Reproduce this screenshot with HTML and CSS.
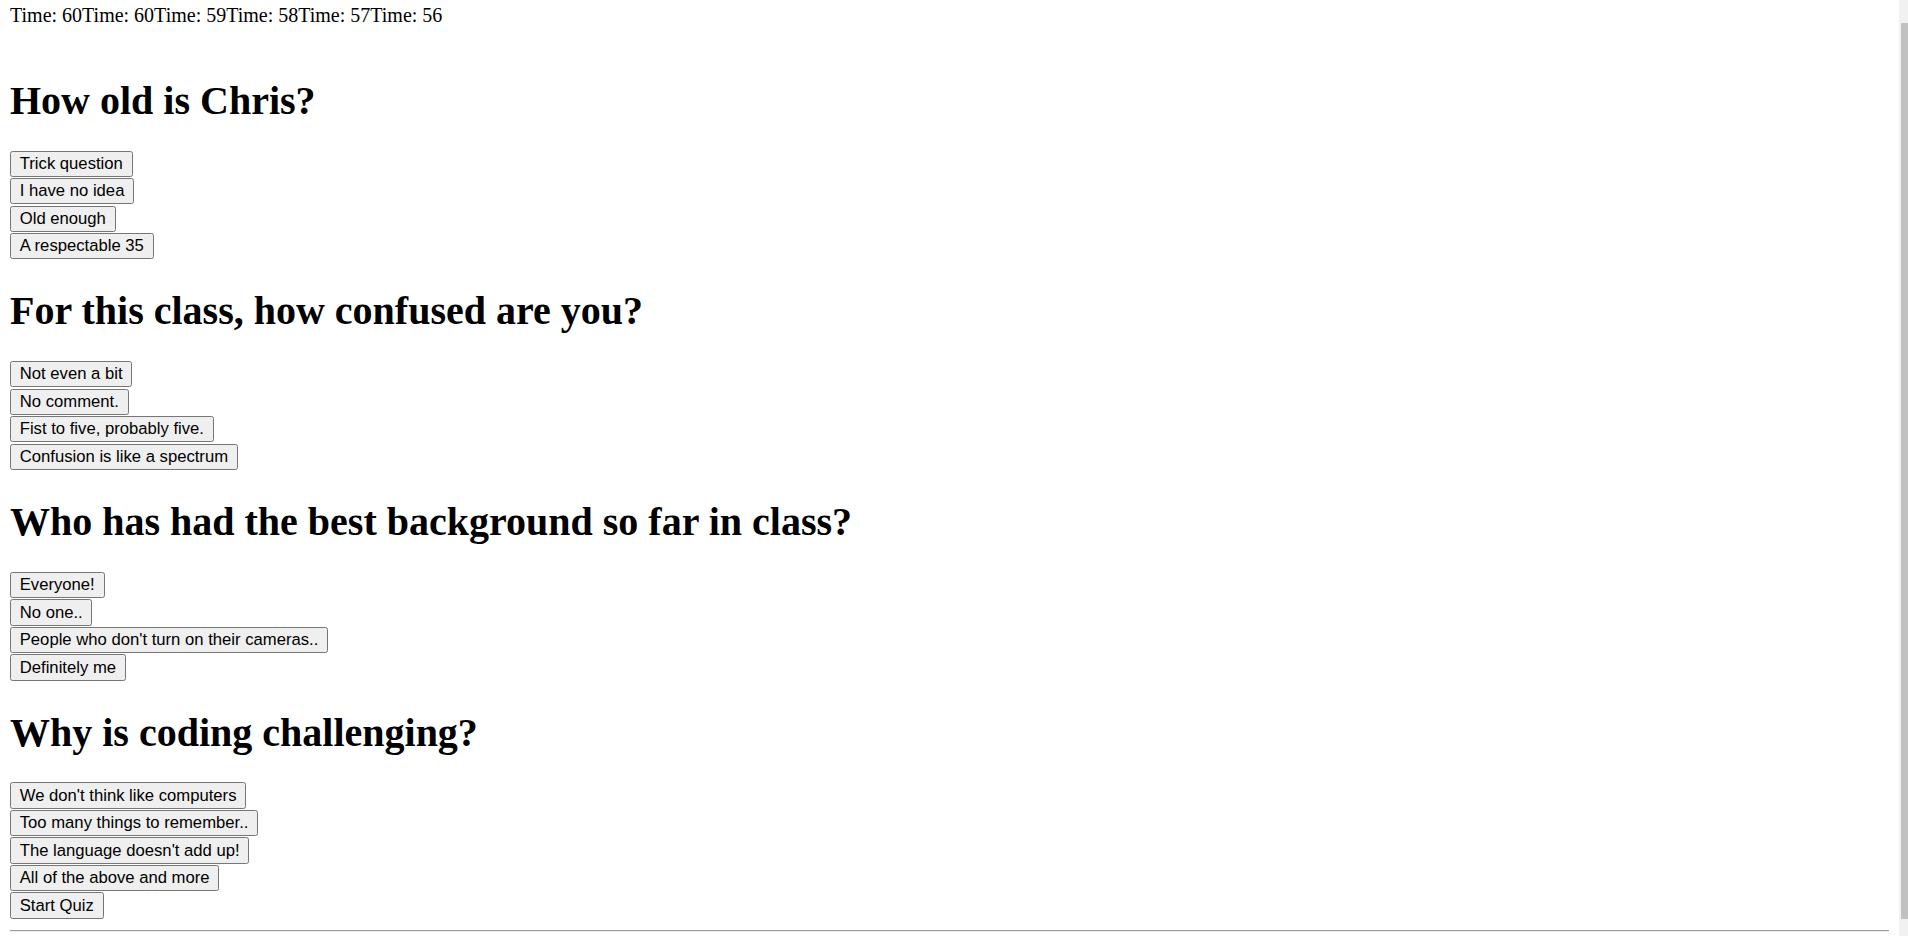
FILE: index.html
```html
<!DOCTYPE html>
<html class="root">
<head>
<meta charset="utf-8">
<title>Quiz</title>
<link rel="stylesheet" href="styles.css">
</head>
<body class="page">
<div class="timer">Time: 60Time: 60Time: 59Time: 58Time: 57Time: 56</div>
<div class="blank-line">&nbsp;</div>
<section class="question">
  <h1 class="question-title">How old is Chris?</h1>
  <div class="choices">
    <button class="btn">Trick question</button>
    <button class="btn">I have no idea</button>
    <button class="btn">Old enough</button>
    <button class="btn">A respectable 35</button>
  </div>
</section>
<section class="question">
  <h1 class="question-title">For this class, how confused are you?</h1>
  <div class="choices">
    <button class="btn">Not even a bit</button>
    <button class="btn">No comment.</button>
    <button class="btn">Fist to five, probably five.</button>
    <button class="btn">Confusion is like a spectrum</button>
  </div>
</section>
<section class="question">
  <h1 class="question-title">Who has had the best background so far in class?</h1>
  <div class="choices">
    <button class="btn">Everyone!</button>
    <button class="btn">No one..</button>
    <button class="btn">People who don't turn on their cameras..</button>
    <button class="btn">Definitely me</button>
  </div>
</section>
<section class="question">
  <h1 class="question-title">Why is coding challenging?</h1>
  <div class="choices">
    <button class="btn">We don't think like computers</button>
    <button class="btn">Too many things to remember..</button>
    <button class="btn">The language doesn't add up!</button>
    <button class="btn">All of the above and more</button>
    <button class="btn">Start Quiz</button>
  </div>
</section>
<hr class="rule">
</body>
</html>
```

FILE: styles.css
```css
.root {
  zoom: 1.25;
  overflow: hidden;
}

/* page scrollbar, as drawn in the screenshot */
.page::after {
  content: "";
  position: fixed;
  top: 0;
  right: 0;
  bottom: 0;
  width: 7.2px;
  background: #f1f1f1;
}

.page::before {
  content: "";
  position: fixed;
  top: 18.4px;
  bottom: 13.6px;
  right: 0;
  width: 5.6px;
  background: #c1c1c1;
  z-index: 1;
}

.page {
  margin: 3.2px 15.2px 0 8px;
  font-family: "Liberation Serif", "Times New Roman", serif;
  font-size: 16px;
  line-height: normal;
  color: #000;
  background: #fff;
}

.timer {
  white-space: nowrap;
}

.question-title {
  font-size: 32px;
  font-weight: bold;
  margin: 21.44px 0;
}

.choices {
  display: flex;
  flex-direction: column;
  align-items: flex-start;
}

.btn {
  box-sizing: border-box;
  height: 21px;
  margin: 0 0 1px 0;
  padding: 0 7px;
  font-family: "Liberation Sans", Arial, sans-serif;
  font-size: 13.333px;
  line-height: 19px;
  color: #000;
  background: #efefef;
  border: 1px solid #767676;
  border-radius: 2px;
}

.rule {
  margin: 8px 0;
  height: 0;
  border: none;
  border-top: 1px solid #9a9a9a;
  border-bottom: 1px solid #eeeeee;
}
```
